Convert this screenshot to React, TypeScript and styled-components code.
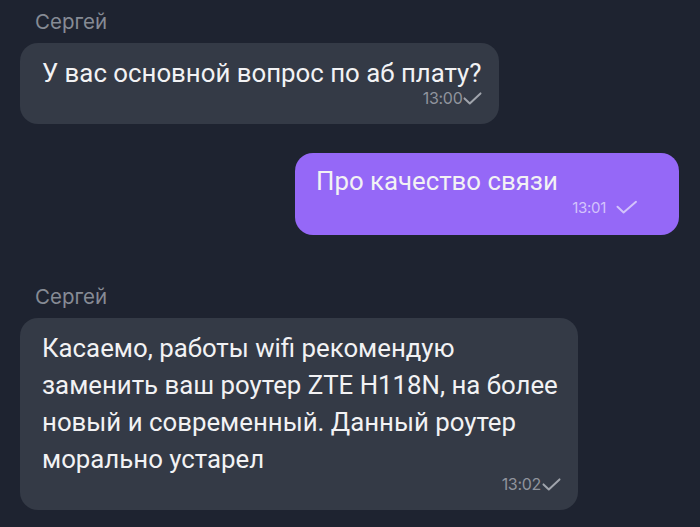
import React from 'react'
import styled, { createGlobalStyle } from 'styled-components'

type Message = {
    id: number
    author?: string
    text: string
    time: string
    outgoing?: boolean
}

const messages: Array<Message> = [
    { id: 1, author: 'Сергей', text: 'У вас основной вопрос по аб плату?', time: '13:00' },
    { id: 2, text: 'Про качество связи', time: '13:01', outgoing: true },
    {
        id: 3,
        author: 'Сергей',
        text: 'Касаемо, работы wifi рекомендую\nзаменить ваш роутер ZTE H118N, на более\nновый и современный. Данный роутер\nморально устарел',
        time: '13:02',
    },
]

const Check: React.FunctionComponent<{ color: string; wide?: boolean }> = ({ color, wide }) => (
    <svg width={wide ? 22 : 19} height="14" viewBox={wide ? '0 0 22 14' : '0 0 19 14'} fill="none">
        <path
            d={wide ? 'M1.5 6.8 L7.6 12.4 L20 1.8' : 'M1.5 7.4 L6.8 12.4 L17.5 2.4'}
            stroke={color}
            strokeWidth="2"
            strokeLinecap="round"
            strokeLinejoin="round"
        />
    </svg>
)

export default function App() {
    return (
        <>
            <GlobalStyle />
            <Chat>
                {messages.map(message => {
                    const outgoing = !!message.outgoing
                    return (
                        <Group key={message.id} $outgoing={outgoing}>
                            {message.author && <Author>{message.author}</Author>}
                            <Bubble $outgoing={outgoing} $multiline={message.text.includes('\n')}>
                                <Text>{message.text}</Text>
                                <Meta $outgoing={outgoing}>
                                    <Time $outgoing={outgoing}>{message.time}</Time>
                                    <Check color={outgoing ? '#d3c3fb' : '#a0a4ac'} wide={outgoing} />
                                </Meta>
                            </Bubble>
                        </Group>
                    )
                })}
            </Chat>
        </>
    )
}

const GlobalStyle = createGlobalStyle`
    html, body {
        margin: 0;
        padding: 0;
        background: #1e2330;
    }
`
const Chat = styled.div`
    width: 700px;
    height: 527px;
    box-sizing: border-box;
    padding: 10px 21px 0 20px;
    display: flex;
    flex-direction: column;
    background: #1e2330;
    overflow: hidden;
    font-family: Roboto, "Noto Sans", sans-serif;
`
const Group = styled.div<{ $outgoing: boolean }>`
    display: flex;
    flex-direction: column;
    align-items: ${({ $outgoing }) => ($outgoing ? 'flex-end' : 'flex-start')};
    margin-bottom: ${({ $outgoing }) => ($outgoing ? '50px' : '29px')};
`
const Author = styled.div`
    font-family: Inter, "Noto Sans", sans-serif;
    font-size: 20.5px;
    line-height: 24px;
    color: #868b95;
    padding-left: 15px;
    margin-bottom: 9px;
`
const Bubble = styled.div<{ $outgoing: boolean; $multiline: boolean }>`
    display: flex;
    flex-direction: column;
    box-sizing: border-box;
    border-radius: 18px;
    background: ${({ $outgoing }) => ($outgoing ? '#9568f7' : '#343a46')};
    padding: ${({ $outgoing }) => ($outgoing ? '10px 42px 18px 21px' : '12px 18px 16px 22px')};
    min-width: ${({ $outgoing }) => ($outgoing ? '384px' : '0')};
    width: ${({ $multiline }) => ($multiline ? '558px' : 'auto')};
`
const Text = styled.div`
    font-size: 25.8px;
    line-height: 37px;
    color: #f2f2f4;
    white-space: pre-line;
`
const Meta = styled.div<{ $outgoing: boolean }>`
    display: flex;
    align-items: center;
    justify-content: flex-end;
    gap: ${({ $outgoing }) => ($outgoing ? '10px' : '1px')};
    height: 20px;
    margin-top: ${({ $outgoing }) => ($outgoing ? '-3px' : '-4px')};
    margin-right: -1px;
`
const Time = styled.span<{ $outgoing: boolean }>`
    font-family: Inter, "Noto Sans", sans-serif;
    font-size: ${({ $outgoing }) => ($outgoing ? '15px' : '16px')};
    letter-spacing: -0.3px;
    color: ${({ $outgoing }) => ($outgoing ? '#d3c3fb' : '#90949d')};
`
